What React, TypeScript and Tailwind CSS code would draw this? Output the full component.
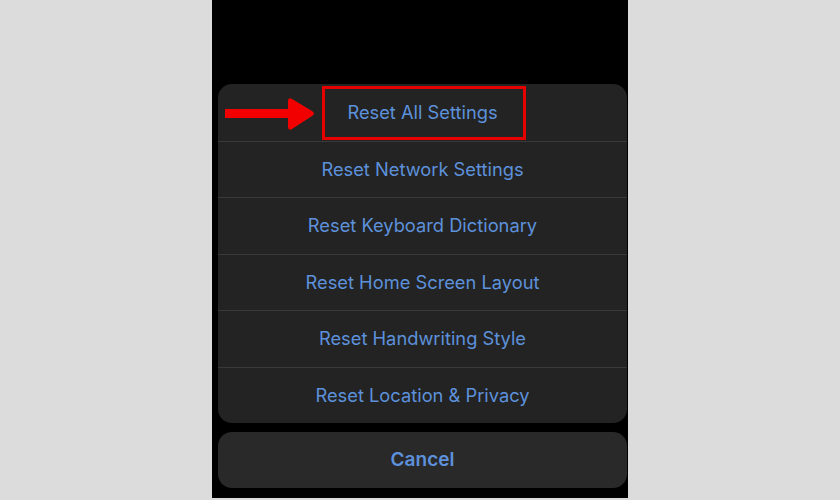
const items = [
  'Reset All Settings',
  'Reset Network Settings',
  'Reset Keyboard Dictionary',
  'Reset Home Screen Layout',
  'Reset Handwriting Style',
  'Reset Location & Privacy',
];

export default function App() {
  return (
    <div
      className="w-[840px] h-[500px] bg-[#dcdcdc] flex justify-center"
      style={{ fontFamily: 'Inter, "Open Sans", sans-serif' }}
    >
      <div className="relative w-[416px] h-[498px] bg-black pt-[84px] pl-[6px] pr-[1px] flex flex-col">
        <div className="rounded-[14px] bg-[#232323] flex flex-col overflow-hidden">
          {items.map((label, i) => (
            <div
              key={label}
              className={`h-[56.5px] flex items-center justify-center text-[18.3px] text-[#5d91db] ${
                i > 0 ? 'border-t border-[#393939]' : ''
              }`}
            >
              {label}
            </div>
          ))}
        </div>
        <div className="mt-[9px] h-[56px] rounded-[14px] bg-[#292929] flex items-center justify-center text-[19px] font-semibold text-[#5d91db]">
          Cancel
        </div>

        {/* annotation */}
        <div className="absolute left-[110px] top-[86px] w-[204px] h-[54px] border-[3px] border-[#e60000]" />
        <svg className="absolute left-[13px] top-[96px]" width="92" height="38" viewBox="0 0 92 38">
          <rect x="0" y="13" width="68" height="9" fill="#f20000" />
          <path
            d="M63 5 Q63 1 67 3 L87 15 Q91 17.5 87 20 L67 33 Q63 35 63 31 Z"
            fill="#f20000"
          />
        </svg>
      </div>
    </div>
  );
}
